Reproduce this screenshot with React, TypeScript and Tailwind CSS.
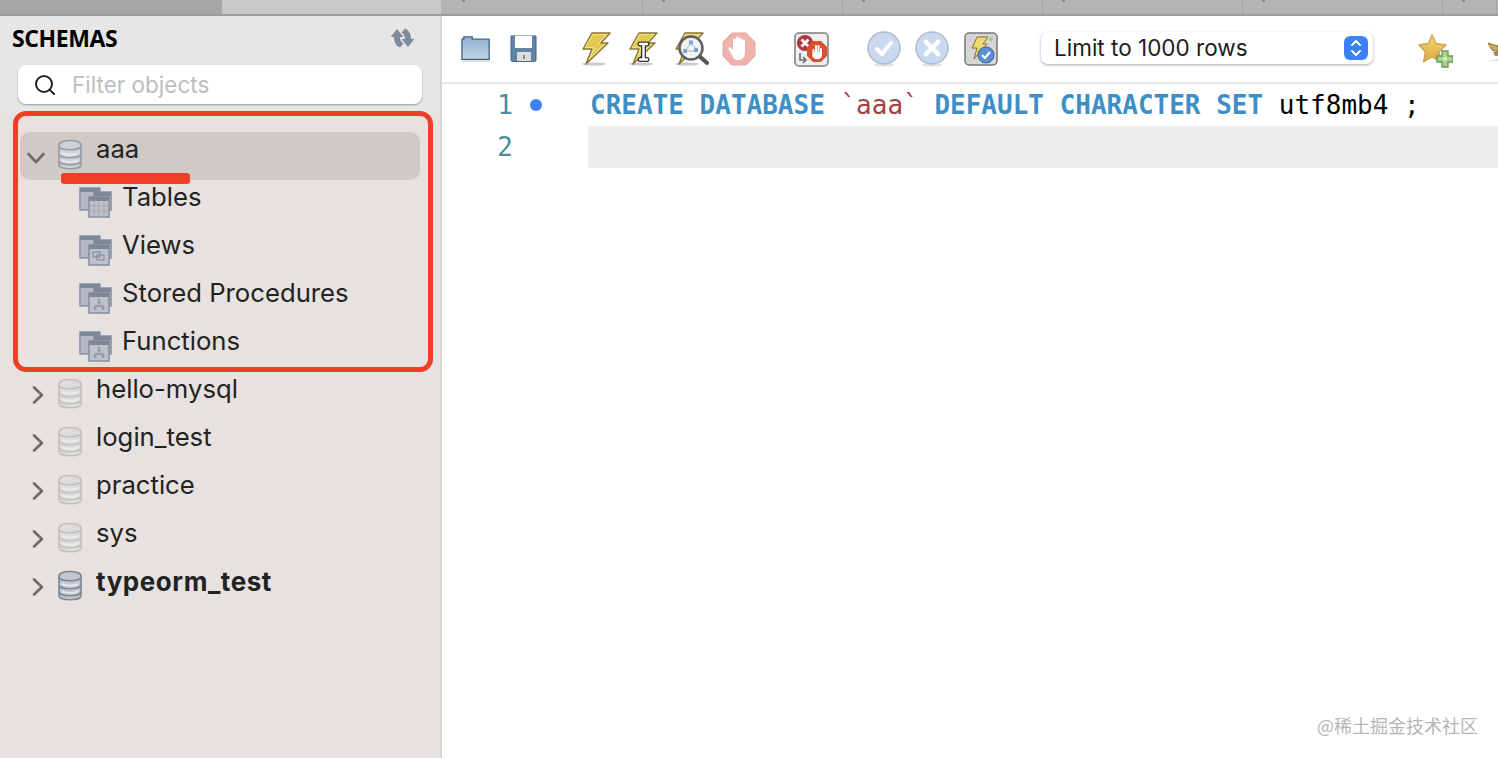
import React from 'react';
import { Search } from 'lucide-react';

const uiFont = "font-['Inter','Liberation_Sans',sans-serif]";
const codeFont = "font-['DejaVu_Sans_Mono','Liberation_Mono',monospace]";

const tabs = [200, 200, 200, 200, 200, 54];

const Bolt = () => (
  <>
    <ellipse cx="13" cy="32" rx="12" ry="1.6" fill="#c9c9c9" />
    <path d="M11 1h18l-9 10h7L5 32l6-15H2z" fill="#efe08a" stroke="#8a7433" strokeWidth="1.4" strokeLinejoin="round" />
    <path d="M12.500 3h12l-8 9h6L10 26l4-11H5z" fill="#e2c94f" />
  </>
);

const Folder = () => (
  <svg width="32" height="30" viewBox="0 0 32 30">
    <defs>
      <linearGradient id="folderFill" x1="0" y1="0" x2="0" y2="1">
        <stop offset="0" stopColor="#8fb2d2" />
        <stop offset="1" stopColor="#c1d5e6" />
      </linearGradient>
    </defs>
    <path d="M1 26V4.500h2V2h9v2.500h18V26z" fill="url(#folderFill)" stroke="#3f6488" strokeWidth="1.4" />
    <rect x="1" y="27" width="30" height="2" fill="#dcdcdc" />
  </svg>
);

const Save = () => (
  <svg width="27" height="28" viewBox="0 0 27 28">
    <path d="M1 1h25v24a1.500 1.500 0 0 1-1.500 1.500h-22A1.500 1.500 0 0 1 1 25z" fill="#5f84a6" stroke="#43668a" />
    <rect x="5" y="1" width="17" height="12" fill="#fff" />
    <rect x="7" y="17" width="14" height="9" fill="#dcdcdc" />
    <rect x="13" y="20" width="2" height="4" fill="#8a8a8a" />
  </svg>
);

const Execute = () => (
  <svg width="30" height="34" viewBox="0 0 30 34">
    <Bolt />
  </svg>
);

const ExecuteLine = () => (
  <svg width="30" height="34" viewBox="0 0 30 34">
    <Bolt />
    <path d="M12 12h7M15.500 12v15M12 27.500h7" stroke="#333" strokeWidth="5" strokeLinecap="round" />
    <path d="M12 12h7M15.500 12v15M12 27.500h7" stroke="#fff" strokeWidth="2.400" strokeLinecap="round" />
  </svg>
);

const Explain = () => (
  <svg width="36" height="34" viewBox="0 0 36 34">
    <Bolt />
    <path d="M24 23l9 8" stroke="#555" strokeWidth="4" strokeLinecap="round" />
    <circle cx="17" cy="16" r="11.500" fill="#f3f3f0" stroke="#606060" strokeWidth="2.500" />
    <path d="M17 11l-6 8M17 11l6 7M11 19h12" stroke="#9db6d8" strokeWidth="1" />
    <rect x="15" y="8.500" width="4" height="4" fill="#7da2d8" />
    <rect x="9" y="17" width="4" height="4" fill="#7da2d8" />
    <rect x="20" y="16" width="4" height="4" fill="#7da2d8" />
  </svg>
);

const StopHand = () => (
  <svg width="34" height="34" viewBox="0 0 34 34">
    <path d="M10 1h14l9 9v14l-9 9H10l-9-9V10z" fill="#efb3ad" stroke="#e7a49d" />
    <path d="M10 23l-4-7 2-1 3 3V8a1.500 1.500 0 0 1 3 0V6a1.500 1.500 0 0 1 3 0v1a1.500 1.500 0 0 1 3 0v2a1.500 1.500 0 0 1 3 0v11c0 5-3 8-7 8s-5-2-6-5z" fill="#fff" />
  </svg>
);

const StopOnError = () => (
  <svg width="35" height="35" viewBox="0 0 35 35">
    <rect x="1" y="1" width="33" height="33" rx="4" fill="#efefef" stroke="#9b9b9b" strokeWidth="2" />
    <circle cx="11" cy="11" r="8" fill="#b23640" />
    <path d="M7.500 7.500l7 7M14.500 7.500l-7 7" stroke="#fff" strokeWidth="2.800" />
    <path d="M19 9h8l6 6v9l-6 6h-8l-6-6v-9z" fill="#d9512f" />
    <path d="M19.500 24v-6M22 22v-8M24.500 22v-8M27 23v-6" stroke="#fff" strokeWidth="2" strokeLinecap="round" />
    <ellipse cx="23.200" cy="23.500" rx="4.600" ry="3.800" fill="#fff" />
    <path d="M6 21v7h5M9 25l3 3-3 3" fill="none" stroke="#6d6d6d" strokeWidth="1.600" />
  </svg>
);

const RoundButton = ({ cross }: { cross?: boolean }) => (
  <svg width="34" height="36" viewBox="0 0 34 36">
    <ellipse cx="17" cy="34" rx="11" ry="1.500" fill="#dfdfdf" />
    <circle cx="17" cy="17" r="16" fill="#cbd9f0" stroke="#aebbd0" strokeWidth="1.500" />
    {cross ? (
      <path d="M11 11l12 12M23 11L11 23" stroke="#fff" strokeWidth="4.500" strokeLinecap="round" />
    ) : (
      <path d="M10 18l5 5 9-11" fill="none" stroke="#fff" strokeWidth="4" strokeLinecap="round" strokeLinejoin="round" />
    )}
  </svg>
);

const AutoCommit = () => (
  <svg width="34" height="34" viewBox="0 0 34 34">
    <rect x="1" y="1" width="32" height="32" rx="4" fill="#d5d5d5" stroke="#777" strokeWidth="1.500" />
    <path d="M13 5h11l-5 7h4L10 27l3-11H8z" fill="#ecd96f" stroke="#84702f" strokeLinejoin="round" />
    <circle cx="27" cy="7" r="2" fill="#8fd08a" />
    <circle cx="22" cy="23" r="8" fill="#5b8fd6" stroke="#33649f" />
    <path d="M18 23l3 3 5-6" fill="none" stroke="#fff" strokeWidth="2" />
  </svg>
);

const Star = () => (
  <svg width="35" height="36" viewBox="0 0 35 36">
    <defs>
      <linearGradient id="starFill" x1="0" y1="0" x2="0" y2="1">
        <stop offset="0" stopColor="#f3d76b" />
        <stop offset="1" stopColor="#dba646" />
      </linearGradient>
    </defs>
    <path d="M14 3l4 8.500 10 1.500-7 7 2 10-9-5-8.500 5 2-10L1 13l9.500-1.500z" fill="url(#starFill)" stroke="#c9a457" strokeWidth="1.400" strokeLinejoin="round" />
    <path d="M24 19h6v5h5v6h-5v5h-6v-5h-5v-6h5z" fill="#a9d48d" stroke="#6b9a55" strokeWidth="1.400" />
    <path d="M25.500 25h3v3.500h-3z" fill="#dff0d2" />
  </svg>
);

const CutOffIcon = () => (
  <svg width="10" height="24" viewBox="0 0 10 24">
    <path d="M0 5l10 3v6l-6-2z" fill="#caa95a" stroke="#8a7433" />
    <path d="M5 14h5v4H7z" fill="#a28a55" />
    <path d="M0 23l10-2v2z" fill="#dcdcdc" />
  </svg>
);

const DbIcon = ({ strong, active }: { strong?: boolean; active?: boolean }) => {
  const body = strong ? '#c3c8d0' : active ? '#d0d2d6' : '#dedcda';
  const line = strong ? '#7d8694' : active ? '#979ca5' : '#c2c1bf';
  return (
    <svg width="26" height="32" viewBox="0 0 26 32">
      <path d="M2 6c0-6 22-6 22 0v20c0 5-22 5-22 0z" fill={body} stroke={line} strokeWidth="1.600" />
      <path d="M2 7c0 5 22 5 22 0M2 15c0 5 22 5 22 0M2 22c0 5 22 5 22 0" fill="none" stroke={line} strokeWidth="1.600" />
      <path d="M5 13c5 2 11 2 16 0v2c-5 2-11 2-16 0zM5 20.500c5 2 11 2 16 0v1.500c-5 2-11 2-16 0z" fill="#f0f0f0" opacity="0.8" />
    </svg>
  );
};

type Kind = 'tables' | 'views' | 'procs';

const FolderIcon = ({ kind }: { kind: Kind }) => (
  <svg width="33" height="32" viewBox="0 0 33 32">
    <rect x="1" y="2" width="20" height="22" fill="#b3b8c2" stroke="#8a91a0" strokeWidth="1.500" />
    <rect x="1" y="2" width="20" height="4" fill="#7f8696" />
    <rect x="15" y="6" width="17" height="18" fill="#b3b8c2" stroke="#8a91a0" strokeWidth="1.500" />
    <rect x="15" y="6" width="17" height="4" fill="#7f8696" />
    <rect x="10" y="11" width="20" height="20" fill="#bcc1ca" stroke="#868d9c" strokeWidth="1.500" />
    <rect x="10" y="11" width="20" height="4" fill="#7f8696" />
    {kind === 'tables' && (
      <path d="M10 20h20M10 25h20M15 15v16M20 15v16M25 15v16" stroke="#a4a9b4" strokeWidth="1" />
    )}
    {kind === 'views' && (
      <>
        <rect x="14" y="18" width="7" height="5" fill="none" stroke="#7f8695" />
        <rect x="18" y="21" width="7" height="5" fill="none" stroke="#7f8695" />
      </>
    )}
    {kind === 'procs' && (
      <path d="M20 17v5M16 24v4M24 24v4M16 24h8" stroke="#959ba8" strokeWidth="2.500" />
    )}
  </svg>
);

const Chevron = ({ open }: { open?: boolean }) => (
  <svg width="20" height="20" viewBox="0 0 20 20" fill="none" stroke="#6b6b6b" strokeWidth="2.600" strokeLinecap="round" strokeLinejoin="round">
    {open ? <path d="M2.500 6l7.500 8 7.500-8" /> : <path d="M6 2.500l8 7.500-8 7.500" />}
  </svg>
);

const Refresh = () => (
  <svg width="23" height="20" viewBox="0 0 23 20" fill="#7f8a9b">
    <path d="M6 1l6.500 8H9c0 3 1 5 3.500 6.500L9 19.500C5 18 3 14 3 9H-.500z" />
    <path d="M17 19l-6.500-8H14c0-3-1-5-3.500-6.500L14 .500c4 1.500 6 5.500 6 10.500h3.500z" />
  </svg>
);

const children: { label: string; kind: Kind }[] = [
  { label: 'Tables', kind: 'tables' },
  { label: 'Views', kind: 'views' },
  { label: 'Stored Procedures', kind: 'procs' },
  { label: 'Functions', kind: 'procs' },
];

const schemas = ['hello-mysql', 'login_test', 'practice', 'sys'];

export default function App() {
  return (
    <div className={`relative w-[1498px] h-[758px] overflow-hidden bg-white flex flex-col ${uiFont}`}>
      {/* tab strip */}
      <div className="flex h-[16px] shrink-0 border-b-2 border-[#9c9c9c]">
        <div className="w-[222px] bg-[#a6a6a6]" />
        <div className="w-[219px] bg-[#c9c9c9]" />
        <div className="flex-1 flex bg-[#b4b4b4] pl-[2px]">
          {tabs.map((w, i) => (
            <div key={i} style={{ width: w }} className="border-r border-[#a2a2a2] pl-[19px]">
              <div className="w-[3px] h-[2px] bg-[#8a8a8a]" />
            </div>
          ))}
        </div>
      </div>

      <div className="flex flex-1 min-h-0">
        {/* sidebar */}
        <aside className="w-[442px] shrink-0 flex flex-col bg-[#e7e2df] border-r-2 border-[#d6d6d6]">
          <div className="h-[96px] shrink-0 bg-[#e6e6e6] px-[12px] pt-[7px]">
            <div className="flex items-center justify-between pr-[14px] h-[30px]">
              <span className="font-['Open_Sans',sans-serif] text-[23px] font-bold text-black tracking-[-0.4px]">SCHEMAS</span>
              <Refresh />
            </div>
            <div className="mt-[12px] ml-[6px] w-[404px] h-[39px] bg-white rounded-[8px] shadow-[0_1px_2px_rgba(0,0,0,0.35)] flex items-center pl-[15px]">
              <Search size={24} strokeWidth={2} className="text-[#222]" />
              <span className="ml-[15px] text-[22.500px] text-[#bdbdbd]">Filter objects</span>
            </div>
          </div>

          <div className="pt-[20px] pl-[20px] pr-[20px]">
            <div className="h-[48px] flex items-center bg-[#cfcac6] rounded-[10px]">
              <div className="w-[36px] pl-[6px] pt-[4px]"><Chevron open /></div>
              <div className="w-[40px] pb-[3px] pl-[1px]"><DbIcon active /></div>
              <span className="text-[25.700px] text-[#222] pb-[13px]">aaa</span>
            </div>
            {children.map(c => (
              <div key={c.label} className="h-[48px] flex items-center pl-[59px]">
                <div className="w-[43px] pb-[4px]"><FolderIcon kind={c.kind} /></div>
                <span className="text-[25.700px] text-[#222] pb-[15px] leading-none">{c.label}</span>
              </div>
            ))}
            {schemas.map(s => (
              <div key={s} className="h-[48px] flex items-center">
                <div className="w-[36px] pl-[8px] pb-[2px]"><Chevron /></div>
                <div className="w-[40px] pb-[4px] pl-[1px]"><DbIcon /></div>
                <span className="text-[25.700px] text-[#222] pb-[14px]">{s}</span>
              </div>
            ))}
            <div className="h-[48px] flex items-center">
              <div className="w-[36px] pl-[8px] pb-[2px]"><Chevron /></div>
              <div className="w-[40px] pb-[4px] pl-[1px]"><DbIcon strong /></div>
              <span className="text-[26px] font-bold text-[#222] pb-[14px] tracking-[0.55px]">typeorm_test</span>
            </div>
          </div>
        </aside>

        {/* main */}
        <main className="flex-1 min-w-0 flex flex-col">
          <div className="h-[68px] shrink-0 border-b-2 border-[#e6e6e6] flex items-center pl-[19px] overflow-hidden">
            <Folder />
            <div className="ml-[19px]"><Save /></div>
            <div className="ml-[44px]"><Execute /></div>
            <div className="ml-[17px]"><ExecuteLine /></div>
            <div className="ml-[16px]"><Explain /></div>
            <div className="ml-[12px]"><StopHand /></div>
            <div className="ml-[38px]"><StopOnError /></div>
            <div className="ml-[38px]"><RoundButton /></div>
            <div className="ml-[14px]"><RoundButton cross /></div>
            <div className="ml-[15px]"><AutoCommit /></div>
            <div className="ml-[43px] w-[332px] h-[32px] mb-[2px] shrink-0 bg-white rounded-[7px] shadow-[0_1px_3px_rgba(0,0,0,0.35)] flex items-center justify-between pl-[13px] pr-[5px]">
              <span className="text-[22.500px] text-[#1d1d1d]">Limit to 1000 rows</span>
              <span className="w-[24px] h-[24px] rounded-[6px] bg-[#3b82f6] flex items-center justify-center">
                <svg width="12" height="18" viewBox="0 0 12 18" fill="none" stroke="#fff" strokeWidth="2" strokeLinecap="round" strokeLinejoin="round">
                  <path d="M2 6l4-4 4 4M2 12l4 4 4-4" />
                </svg>
              </span>
            </div>
            <div className="ml-[45px] shrink-0 pt-[2px]"><Star /></div>
            <div className="ml-[35px] shrink-0 pt-[2px]"><CutOffIcon /></div>
          </div>

          <div className={`${codeFont} text-[26px]`}>
            <div className="h-[42px] flex items-center">
              <span className="w-[71px] text-right text-[#4b8ba3]">1</span>
              <span className="ml-[17px] w-[12px] h-[12px] rounded-full bg-[#3b82f6]" />
              <span className="ml-[48px] whitespace-pre text-black">
                <span className="font-bold text-[#3f8fc7]">CREATE DATABASE</span>{' '}
                <span className="text-[#a63f3f]">`aaa`</span>{' '}
                <span className="font-bold text-[#3f8fc7]">DEFAULT CHARACTER SET</span> utf8mb4 ;
              </span>
            </div>
            <div className="h-[42px] flex items-center">
              <span className="w-[71px] text-right text-[#4b8ba3]">2</span>
              <div className="ml-[75px] flex-1 h-full bg-[#eeeeee]" />
            </div>
          </div>
        </main>
      </div>

      {/* red annotation drawn over the tree */}
      <div className="absolute left-[13px] top-[111px] w-[420px] h-[261px] border-[5px] border-[#ee4027] rounded-[13px]" />
      <div className="absolute left-[61px] top-[173px] w-[129px] h-[11px] bg-[#ee4027] rounded-[3px]" />

      {/* watermark */}
      <div className="absolute right-[20px] top-[712px] text-[18px] text-[#b5b5b5] font-['Noto_Sans_CJK_SC',sans-serif]">@稀土掘金技术社区</div>
    </div>
  );
}
